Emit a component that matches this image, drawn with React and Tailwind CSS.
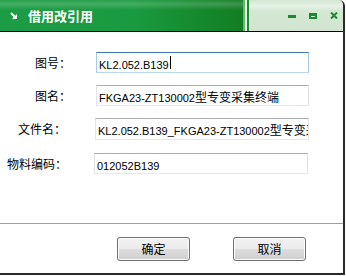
import React from "react";

const cjk = { fontFamily: '"Noto Sans CJK SC", "Liberation Sans", sans-serif' };
const latin = { fontFamily: '"Liberation Sans", "Noto Sans CJK SC", sans-serif' };

function Txt({ children }) {
  // split into latin / CJK runs so latin uses 11px and CJK 12px
  const parts = [];
  let buf = "";
  let isC = null;
  for (const ch of children) {
    const c = /[\u3400-\u9fff]/.test(ch);
    if (isC === null) isC = c;
    if (c !== isC) {
      parts.push([isC, buf]);
      buf = "";
      isC = c;
    }
    buf += ch;
  }
  if (buf) parts.push([isC, buf]);
  return (
    <>
      {parts.map(([c, s], i) =>
        c ? (
          <span key={i} className="text-[12px]" style={cjk}>{s}</span>
        ) : (
          <span key={i} className="text-[11px]" style={latin}>{s}</span>
        )
      )}
    </>
  );
}

function Field({ label, labelPad, value, inputLeft, inputWidth, height, focused, mt }) {
  return (
    <div className={`flex items-center ${mt}`}>
      <div className="shrink-0 text-[12px] text-black leading-none" style={{ ...cjk, width: inputLeft, paddingLeft: labelPad }}>
        {label}：
      </div>
      <div
        className={`relative flex items-center overflow-hidden whitespace-nowrap bg-white pl-[2px] text-black border ${
          focused
            ? "border-[#a4c9e3] border-t-[#3d7bad] border-b-[#b7d9ed]"
            : "border-[#e2e3ea] border-t-[#abadb3] border-b-[#e3e9ef]"
        }`}
        style={{ width: inputWidth, height }}
      >
        <span className="leading-none"><Txt>{value}</Txt></span>
        {focused && <span className="ml-[1px] inline-block h-[13px] w-[1px] bg-black" />}
      </div>
    </div>
  );
}

function Btn({ children }) {
  return (
    <div className="flex h-[24px] w-[73px] items-center justify-center rounded-[3px] border border-[#707070] bg-[linear-gradient(to_bottom,#f2f2f2_0%,#ebebeb_50%,#dddddd_50%,#cfcfcf_100%)] shadow-[inset_0_0_0_1px_#fcfcfc] text-[12px] text-black" style={cjk}>
      {children}
    </div>
  );
}

export default function App() {
  return (
    <div className="h-[276px] w-[346px] overflow-hidden bg-white">
      <div className="w-[345px] border-r-2 border-b-2 border-[#2a2a2a] rounded-tr-[6px] overflow-hidden">
        {/* title bar */}
        <div className="flex h-[31px]">
          <div className="relative flex w-[243px] items-center bg-[linear-gradient(to_right,#1c9d45_0%,#1a9a40_55%,#168a2e_80%,#137d24_100%)]">
            <div className="absolute inset-x-0 top-0 h-[10px] bg-[linear-gradient(to_bottom,rgba(255,255,255,0.05),rgba(255,255,255,0.18)_40%,rgba(255,255,255,0))]" />
            <svg className="relative ml-[10px]" width="8" height="8" viewBox="0 0 8 8">
              <path d="M1 1 L6 6" stroke="white" strokeWidth="2" />
              <path d="M2 7 L7 7 L7 2 Z" fill="white" />
            </svg>
            <span className="relative ml-[10px] text-[13px] font-bold text-white leading-none" style={cjk}>
              借用改引用
            </span>
          </div>
          <div className="w-[2px] bg-[#5dbb6a]" />
          <div className="w-[2px] bg-[#eef8ee]" />
          <div className="w-[2px] bg-[#1a8a30]" />
          <div className="relative flex flex-1 items-center bg-[linear-gradient(to_bottom,#d2e6d2_0%,#e6f2e6_20%,#d5e8d4_35%,#d0e4cf_100%)]">
            <div className="ml-[39px] mt-[1px] h-[3px] w-[8px] bg-[#1a8a30]" />
            <div className="ml-[13px] h-[6px] w-[8px] border-2 border-t-[3px] border-[#1a8a30] box-border" />
            <svg className="ml-[13px]" width="8" height="7" viewBox="0 0 8 7">
              <path d="M1 0.5 L7 6.5 M7 0.5 L1 6.5" stroke="#1a8a30" strokeWidth="2" />
            </svg>
          </div>
        </div>
        <div className="h-[1px] bg-black" />
        {/* form */}
        <div className="h-[191px] bg-white pt-[20px]">
          <Field label="图号" labelPad={35} value="KL2.052.B139" inputLeft={96} inputWidth={213} height={21} focused mt="" />
          <Field label="图名" labelPad={35} value="FKGA23-ZT130002型专变采集终端" inputLeft={96} inputWidth={213} height={21} mt="mt-[12px]" />
          <Field label="文件名" labelPad={18} value="KL2.052.B139_FKGA23-ZT130002型专变采集终端" inputLeft={95} inputWidth={214} height={22} mt="mt-[12px]" />
          <Field label="物料编码" labelPad={7} value="012052B139" inputLeft={94} inputWidth={214} height={21} mt="mt-[13px]" />
        </div>
        <div className="h-[1px] bg-[#a0a0a0]" />
        <div className="flex h-[49px] gap-[43px] bg-white pl-[117px] pt-[13px]">
          <Btn>确定</Btn>
          <Btn>取消</Btn>
        </div>
      </div>
    </div>
  );
}
